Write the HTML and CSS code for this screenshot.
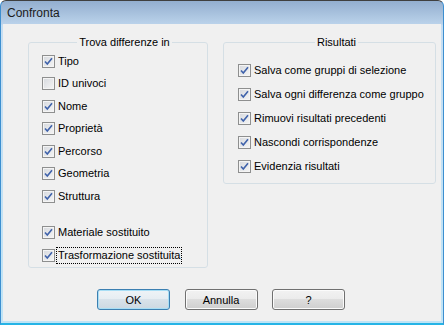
FILE: index.html
```html
<!DOCTYPE html>
<html>
<head>
<meta charset="utf-8">
<link rel="stylesheet" href="styles.css">
</head>
<body>
<div class="window">
  <div class="titlebar">Confronta</div>
  <div class="client">
    <div class="groups">
      <fieldset class="group group-left">
        <legend>Trova differenze in</legend>
        <div class="row"><span class="cb checked"></span><span class="lbl">Tipo</span></div>
        <div class="row"><span class="cb"></span><span class="lbl">ID univoci</span></div>
        <div class="row"><span class="cb checked"></span><span class="lbl">Nome</span></div>
        <div class="row"><span class="cb checked"></span><span class="lbl">Proprietà</span></div>
        <div class="row"><span class="cb checked"></span><span class="lbl">Percorso</span></div>
        <div class="row"><span class="cb checked"></span><span class="lbl">Geometria</span></div>
        <div class="row"><span class="cb checked"></span><span class="lbl">Struttura</span></div>
        <div class="row row-sep"><span class="cb checked"></span><span class="lbl">Materiale sostituito</span></div>
        <div class="row row-last"><span class="cb checked"></span><span class="lbl focus">Trasformazione sostituita</span></div>
      </fieldset>
      <fieldset class="group group-right">
        <legend>Risultati</legend>
        <div class="row"><span class="cb checked"></span><span class="lbl">Salva come gruppi di selezione</span></div>
        <div class="row"><span class="cb checked"></span><span class="lbl">Salva ogni differenza come gruppo</span></div>
        <div class="row"><span class="cb checked"></span><span class="lbl">Rimuovi risultati precedenti</span></div>
        <div class="row"><span class="cb checked"></span><span class="lbl">Nascondi corrispondenze</span></div>
        <div class="row"><span class="cb checked"></span><span class="lbl">Evidenzia risultati</span></div>
      </fieldset>
    </div>
    <div class="buttons">
      <button class="btn btn-default">OK</button>
      <button class="btn">Annulla</button>
      <button class="btn">?</button>
    </div>
  </div>
</div>
</body>
</html>
```

FILE: styles.css
```css
* { box-sizing: border-box; }
html, body { margin: 0; padding: 0; }
body {
  width: 444px;
  height: 325px;
  background: #ffffff;
  font-family: "Liberation Sans", Arial, sans-serif;
  font-size: 11px;
  color: #000;
}
.window {
  width: 444px;
  height: 325px;
  display: flex;
  flex-direction: column;
  border: 1px solid #3f3f3f;
  border-left-color: #3d8fd0;
  border-right-color: #3d8fd0;
  border-bottom: 2px solid #26b4e6;
  border-radius: 6px 6px 0 0;
  background: linear-gradient(#93aecf 0, #bad2ea 23px, #c6def2 24px, #bfe4f6 100%);
  overflow: hidden;
}
.titlebar {
  height: 23px;
  flex: none;
  padding-left: 6px;
  font-size: 12px;
  line-height: 24px;
  color: #1b1b1b;
}
.client {
  flex: 1;
  margin: 0 2px 2px 2px;
  background: #f0f0f0;
  display: flex;
  flex-direction: column;
}
.groups {
  display: flex;
  align-items: flex-start;
  gap: 15px;
  padding: 12px 0 0 25px;
}
.group {
  margin: 0;
  border: 1px solid #d5dfe5;
  border-radius: 3px;
  padding: 0;
}
.group legend {
  margin: 0 auto;
  padding: 0 2px;
  line-height: 13px;
  height: 13px;
}
.group-left {
  width: 180px;
  height: 232px;
  padding: 1px 0 0 13px;
}
.group-right {
  width: 213px;
  height: 148px;
  padding: 9px 0 0 14px;
}
.row {
  display: flex;
  align-items: center;
  height: 22.5px;
}
.group-right .row { height: 24.2px; }
.row-sep { margin-top: 13.5px; }
.row-last { height: 24px; }
.cb {
  flex: none;
  width: 13px;
  height: 13px;
  border: 1px solid #8e8f8f;
  background: linear-gradient(135deg, #d6d9de 0%, #f5f5f5 100%);
  box-shadow: inset 0 0 0 1px #f4f4f4;
  margin-right: 3px;
  position: relative;
}
.cb.checked::after {
  content: "";
  position: absolute;
  left: 1px;
  top: 1px;
  width: 9px;
  height: 9px;
  background: url("data:image/svg+xml;utf8,<svg xmlns='http://www.w3.org/2000/svg' width='9' height='9' viewBox='0 0 9 9'><path d='M1 4.5 L3.3 7 L8 1.2' fill='none' stroke='%234063ab' stroke-width='1.6' stroke-linejoin='miter'/></svg>") no-repeat;
}
.lbl {
  line-height: 13px;
  white-space: nowrap;
}
.lbl.focus {
  outline: 1px dotted #000;
  outline-offset: 1px;
}
.buttons {
  display: flex;
  gap: 14.5px;
  padding-left: 94px;
  margin-top: 21px;
}
.btn {
  width: 73px;
  height: 21px;
  font-family: "Liberation Sans", Arial, sans-serif;
  font-size: 11px;
  color: #000;
  border: 1px solid #707070;
  border-radius: 3px;
  background: linear-gradient(#f2f2f2 0%, #ebebeb 50%, #dddddd 50%, #cfcfcf 100%);
  box-shadow: inset 0 0 0 1px #fbfbfb;
  padding: 0;
  margin: 0;
}
.btn-default {
  border-color: #3c7fb1;
  background: linear-gradient(#eef3f7 0%, #e6edf2 50%, #d8e2ea 50%, #ccd8e1 100%);
  box-shadow: inset 0 0 0 1px #a8def5;
}
```
